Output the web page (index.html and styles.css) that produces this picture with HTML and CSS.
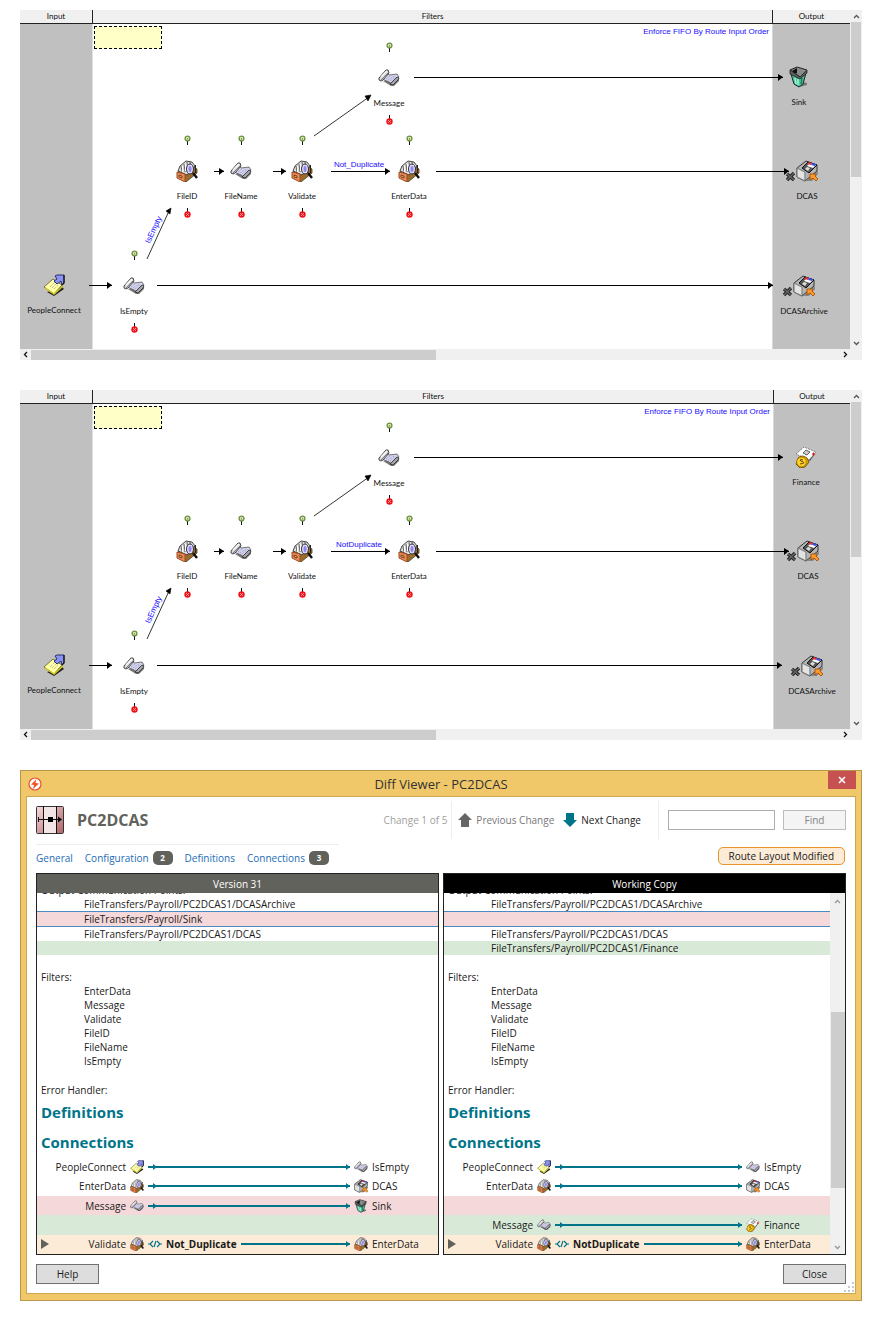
FILE: index.html
```html
<!DOCTYPE html>
<html lang="en">
<head>
<meta charset="utf-8">
<title>Diff Viewer - PC2DCAS</title>
<link rel="stylesheet" href="styles.css">
</head>
<body>
<svg class="defs" aria-hidden="true">
  <symbol id="scroll" viewBox="0 0 22 22">
    <path d="M5 14l8 5h3l5-5v-2z" fill="#777"/>
    <path d="M8 4l3 4 8-1 2 3-7 7-3-2-7-3z" fill="#d4d4ee" stroke="#555" stroke-width=".8"/>
    <path d="M1 11l7-8h2l1 3-6 7-2 1-2-1z" fill="#d8d8dc" stroke="#333" stroke-width=".9"/>
    <path d="M3 10l6-6" stroke="#fff" stroke-width="1.200"/>
    <path d="M3 13l7-7" stroke="#666" stroke-width=".8"/>
    <path d="M12 17l7-7 2 1-1 2-5 5z" fill="#a4a4ac" stroke="#333" stroke-width=".9"/>
    <path d="M8 12l4-3M10 13l6-4M12 14l6-5" stroke="#8c8cbc" stroke-width=".8" stroke-dasharray="1 1"/>
  </symbol>
  <symbol id="cards" viewBox="0 0 22 22">
    <path d="M1 13L12 3l9 6v4l-11 9z" fill="#9a6b2a" stroke="#442" stroke-width=".8"/>
    <path d="M2 11L4 6l6-5 6 1 3 4-8 9z" fill="#dcdcdc" stroke="#333" stroke-width=".9"/>
    <path d="M5 6l1 6M8 4l1 8M11 2l1 8M14 2l1 6" stroke="#555" stroke-width=".9"/>
    <path d="M6.500 6v6M9.500 4v7" stroke="#fff"/>
    <path d="M1 12l8 2v8l-8-4z" fill="#ea8a58" stroke="#a04a20"/>
    <path d="M3 15l3 1v2l-3-1z" fill="#d8b040" stroke="#632" stroke-width=".8"/>
    <ellipse cx="14" cy="9" rx="3.500" ry="5" fill="#dcd8ff" stroke="#333"/>
    <ellipse cx="14" cy="9" rx="1.500" ry="3" fill="#9088e8"/>
    <path d="M17 13l4 5" stroke="#111" stroke-width="2.400"/>
    <path d="M19.500 5v8" stroke="#222"/>
  </symbol>
  <symbol id="note" viewBox="0 0 22 22">
    <path d="M4 18l7 4 10-7-2-2z" fill="#222"/>
    <path d="M1 13L10 5l9 6-8 9z" fill="#ffffa8" stroke="#77733a"/>
    <path d="M2 14l9 6 9-8" fill="none" stroke="#d0c820" stroke-width="1.400"/>
    <path d="M7 13l5-5M9 14l5-5M11 15l4-4" stroke="#888" stroke-width=".8" stroke-dasharray="1 1"/>
    <path d="M12 2l2-1h7v8l-2 2-1-4-4 3-3-3 3-2z" fill="#8c92f4" stroke="#26306c"/>
    <path d="M21 1v8l-2 2" fill="none" stroke="#111" stroke-width="1.200"/>
  </symbol>
  <symbol id="bin" viewBox="0 0 22 22">
    <path d="M12 21l7-2v-2l-4-1z" fill="#777"/>
    <path d="M3 8l9 4 6-5-3 11-4 3-5-3z" fill="#4cc496" stroke="#123"/>
    <path d="M7 12l1 6M10 13v6" stroke="#a8f4d8" stroke-width="1.400"/>
    <path d="M14 12l-1 6" stroke="#1d7a5a" stroke-width="1.400"/>
    <path d="M2 4l7-3 10 3-7 7z" fill="#8a8a8a" stroke="#222"/>
    <path d="M4 5l5-3v5l-2 1z" fill="#111"/>
    <path d="M2 4v4l10 5 7-6V4l-7 7z" fill="#5c6462" stroke="#222" stroke-width=".8"/>
  </symbol>
  <symbol id="disk" viewBox="0 0 22 22">
    <path d="M10 21h6l6-7v-3z" fill="#888"/>
    <path d="M1 8l9-7 11 4v6L9 21l-8-4z" fill="#b4b4b4" stroke="#333"/>
    <path d="M1 8l8 4v9l-8-4z" fill="#d4d4d4" stroke="#777"/>
    <path d="M3 10v7M5 11v7M7 12v7" stroke="#f2f2f2"/>
    <path d="M6 8l6-6 9 3-8 8z" fill="#555" stroke="#111"/>
    <path d="M11 6l3-3 6 2-3 3z" fill="#fff"/>
    <path d="M11 4l2-2 3 1-1 2z" fill="#e2363c"/>
    <path d="M16 3l4 1-1 2-4-1z" fill="#3850e8"/>
    <path d="M9 9l2-2 3 1-2 3z" fill="#ddd"/>
    <path d="M14 14h6l-1 2 3 3-2 2-3-3-3 2z" fill="#ff9a2a" stroke="#9c4a00" stroke-width=".8"/>
  </symbol>
  <symbol id="money" viewBox="0 0 22 22">
    <path d="M8 10l12-2-5 7z" fill="#555"/>
    <path d="M1 8l8-7 12 5-7 8z" fill="#fff" stroke="#666" stroke-width=".8" stroke-dasharray="2 1"/>
    <path d="M8 7l3-3 4 2-3 3z" fill="#ccc" stroke="#444" stroke-width=".8"/>
    <path d="M17 8h3M18.500 6.500v3" stroke="#e01818" stroke-width="1.200"/>
    <path d="M3 12q4-4 9 0l2 4-4 5-5 1-4-4z" fill="#e0a400" stroke="#5c4400" stroke-width=".8"/>
    <circle cx="6.500" cy="16" r="4.800" fill="#ffd428" stroke="#a87000" stroke-width=".8"/>
    <path d="M8 14q-3-1-3 0t3 2-3 2" fill="none" stroke="#6a4200"/>
  </symbol>
  <symbol id="cross" viewBox="0 0 11 11">
    <path d="M2 3l7 6M9 2L2 9" stroke="#222" stroke-width="3.400"/>
    <path d="M2 3l7 6M9 2L2 9" stroke="#666" stroke-width="1.400"/>
  </symbol>
  <symbol id="pin-in" viewBox="0 0 7 10">
    <path d="M3.500 6v4" stroke="#111"/>
    <circle cx="3.500" cy="3.500" r="2.400" fill="#e4ecc8" stroke="#6f9440" stroke-width="1.400"/>
    <path d="M2.500 4.500l1-2 1 2z" fill="#6f9440"/>
  </symbol>
  <symbol id="pin-err" viewBox="0 0 7 10">
    <path d="M3.500 0v5" stroke="#111"/>
    <circle cx="3.500" cy="6.500" r="3.200" fill="#f01018"/>
    <path d="M2 5l3 3M5 5L2 8" stroke="#ffb0b0" stroke-width=".8"/>
  </symbol>
  <symbol id="chevron" viewBox="0 0 7 7"><path d="M1 5l2.500-2.500L6 5" fill="none" stroke="currentColor" stroke-width="1.300"/></symbol>
  <symbol id="script" viewBox="0 0 14 8">
    <path d="M0 4h2M12 4h2M5 1L2 4l3 3M9 1l3 3-3 3M8 1L6 7" fill="none" stroke="#007489" stroke-width="1.200"/>
  </symbol>
</svg>

<main class="page">
  <section class="route route-old" aria-label="Route, version 31">
    <div class="route-main">
      <header class="lane-heads"><span class="head-input">Input</span><span class="head-filters">Filters</span><span class="head-output">Output</span></header>
      <div class="canvas">
        <div class="lane lane-input">
          <div class="endpoint at-people"><svg class="icon"><use href="#note"/></svg><span>PeopleConnect</span></div>
        </div>
        <div class="lane lane-filters">
          <div class="sticky-note"></div>
          <p class="fifo">Enforce FIFO By Route Input Order</p>
        </div>
        <div class="lane lane-output">
          <div class="endpoint at-top"><svg class="icon"><use href="#bin"/></svg><span>Sink</span></div>
          <div class="endpoint at-dcas"><svg class="icon"><use href="#disk"/></svg><svg class="cross"><use href="#cross"/></svg><span>DCAS</span></div>
          <div class="endpoint at-archive"><svg class="icon"><use href="#disk"/></svg><svg class="cross"><use href="#cross"/></svg><span>DCASArchive</span></div>
        </div>
        <div class="filter at-message"><svg class="pin"><use href="#pin-in"/></svg><svg class="icon"><use href="#scroll"/></svg><span>Message</span><svg class="pin"><use href="#pin-err"/></svg></div>
        <div class="filter at-fileid"><svg class="pin"><use href="#pin-in"/></svg><svg class="icon"><use href="#cards"/></svg><span>FileID</span><svg class="pin"><use href="#pin-err"/></svg></div>
        <div class="filter at-filename"><svg class="pin"><use href="#pin-in"/></svg><svg class="icon"><use href="#scroll"/></svg><span>FileName</span><svg class="pin"><use href="#pin-err"/></svg></div>
        <div class="filter at-validate"><svg class="pin"><use href="#pin-in"/></svg><svg class="icon"><use href="#cards"/></svg><span>Validate</span><svg class="pin"><use href="#pin-err"/></svg></div>
        <div class="filter at-enterdata"><svg class="pin"><use href="#pin-in"/></svg><svg class="icon"><use href="#cards"/></svg><span>EnterData</span><svg class="pin"><use href="#pin-err"/></svg></div>
        <div class="filter at-isempty"><svg class="pin"><use href="#pin-in"/></svg><svg class="icon"><use href="#scroll"/></svg><span>IsEmpty</span><svg class="pin"><use href="#pin-err"/></svg></div>
        <div class="wire wire-people"></div>
        <div class="wire wire-fileid"></div>
        <div class="wire wire-filename"></div>
        <div class="wire wire-validate"></div>
        <div class="wire wire-message"></div>
        <div class="wire wire-dcas"></div>
        <div class="wire wire-archive"></div>
        <svg class="diagonals" viewBox="0 0 380 240"><g fill="none" stroke="#000" stroke-width=".8"><path d="M294 112L349 73M127 235l22-48"/></g><path d="M351 71l-3 6-3-5zM151 184l-1 6-4-3z" stroke="#000" stroke-width=".6"/></svg>
        <span class="wire-label label-duplicate">Not_Duplicate</span>
        <span class="wire-label label-empty">IsEmpty</span>
      </div>
    </div>
    <div class="vscroll"><svg class="chev"><use href="#chevron"/></svg><i class="thumb"></i><svg class="chev down"><use href="#chevron"/></svg></div>
    <div class="hscroll"><svg class="chev left"><use href="#chevron"/></svg><i class="thumb"></i><svg class="chev right"><use href="#chevron"/></svg></div>
  </section>

  <section class="route route-new" aria-label="Route, working copy">
    <div class="route-main">
      <header class="lane-heads"><span class="head-input">Input</span><span class="head-filters">Filters</span><span class="head-output">Output</span></header>
      <div class="canvas">
        <div class="lane lane-input">
          <div class="endpoint at-people"><svg class="icon"><use href="#note"/></svg><span>PeopleConnect</span></div>
        </div>
        <div class="lane lane-filters">
          <div class="sticky-note"></div>
          <p class="fifo">Enforce FIFO By Route Input Order</p>
        </div>
        <div class="lane lane-output">
          <div class="endpoint at-top"><svg class="icon"><use href="#money"/></svg><span>Finance</span></div>
          <div class="endpoint at-dcas"><svg class="icon"><use href="#disk"/></svg><svg class="cross"><use href="#cross"/></svg><span>DCAS</span></div>
          <div class="endpoint at-archive"><svg class="icon"><use href="#disk"/></svg><svg class="cross"><use href="#cross"/></svg><span>DCASArchive</span></div>
        </div>
        <div class="filter at-message"><svg class="pin"><use href="#pin-in"/></svg><svg class="icon"><use href="#scroll"/></svg><span>Message</span><svg class="pin"><use href="#pin-err"/></svg></div>
        <div class="filter at-fileid"><svg class="pin"><use href="#pin-in"/></svg><svg class="icon"><use href="#cards"/></svg><span>FileID</span><svg class="pin"><use href="#pin-err"/></svg></div>
        <div class="filter at-filename"><svg class="pin"><use href="#pin-in"/></svg><svg class="icon"><use href="#scroll"/></svg><span>FileName</span><svg class="pin"><use href="#pin-err"/></svg></div>
        <div class="filter at-validate"><svg class="pin"><use href="#pin-in"/></svg><svg class="icon"><use href="#cards"/></svg><span>Validate</span><svg class="pin"><use href="#pin-err"/></svg></div>
        <div class="filter at-enterdata"><svg class="pin"><use href="#pin-in"/></svg><svg class="icon"><use href="#cards"/></svg><span>EnterData</span><svg class="pin"><use href="#pin-err"/></svg></div>
        <div class="filter at-isempty"><svg class="pin"><use href="#pin-in"/></svg><svg class="icon"><use href="#scroll"/></svg><span>IsEmpty</span><svg class="pin"><use href="#pin-err"/></svg></div>
        <div class="wire wire-people"></div>
        <div class="wire wire-fileid"></div>
        <div class="wire wire-filename"></div>
        <div class="wire wire-validate"></div>
        <div class="wire wire-message"></div>
        <div class="wire wire-dcas"></div>
        <div class="wire wire-archive"></div>
        <svg class="diagonals" viewBox="0 0 380 240"><g fill="none" stroke="#000" stroke-width=".8"><path d="M294 112L349 73M127 235l22-48"/></g><path d="M351 71l-3 6-3-5zM151 184l-1 6-4-3z" stroke="#000" stroke-width=".6"/></svg>
        <span class="wire-label label-duplicate">NotDuplicate</span>
        <span class="wire-label label-empty">IsEmpty</span>
      </div>
    </div>
    <div class="vscroll"><svg class="chev"><use href="#chevron"/></svg><i class="thumb"></i><svg class="chev down"><use href="#chevron"/></svg></div>
    <div class="hscroll"><svg class="chev left"><use href="#chevron"/></svg><i class="thumb"></i><svg class="chev right"><use href="#chevron"/></svg></div>
  </section>

  <section class="dialog" role="dialog" aria-labelledby="dialog-title">
    <header class="titlebar">
      <svg class="app-icon" viewBox="0 0 14 14"><circle cx="7" cy="7" r="6" fill="#fff" stroke="#e8502a" stroke-width="1.200"/><path d="M8.500 2L3 7.500l3 .5L5 12l6-5.500-3.500-.5z" fill="#f0542c"/></svg>
      <h1 id="dialog-title" class="title">Diff Viewer - PC2DCAS</h1>
      <button class="close-x" type="button" aria-label="Close window"><svg viewBox="0 0 8 8"><path d="M1 1l6 6M7 1L1 7" stroke="#fff" stroke-width="1.600"/></svg></button>
    </header>
    <div class="dialog-body">
      <div class="toolbar">
        <div class="route-id">
          <svg class="route-icon" viewBox="0 0 28 28">
            <defs><linearGradient id="rose" x2="1" y2="1"><stop stop-color="#f6dada"/><stop offset="1" stop-color="#b06468"/></linearGradient></defs>
            <rect x=".5" y=".5" width="27" height="27" rx="1" fill="#f3e4e6" stroke="#333"/>
            <path d="M1 1h6v26H1zM21 1h6v26h-6z" fill="url(#rose)"/>
            <path d="M7.500 0v28M20.500 0v28" stroke="#111"/>
            <path d="M2 13.500h22M2.500 11v5" stroke="#111"/><path d="M12 11h5v5h-5zM22 10.500l4 3-4 3z" fill="#000"/>
          </svg>
          <h2 class="route-name">PC2DCAS</h2>
        </div>
        <div class="stepper">
          <span class="counter">Change 1 of 5</span>
          <div class="step-buttons">
            <button class="step prev" type="button"><svg viewBox="0 0 14 14"><path d="M7 0l7 7h-3v7H3V7H0z" fill="#666"/></svg>Previous Change</button>
            <button class="step" type="button"><svg viewBox="0 0 14 14"><path d="M7 14l7-7h-3V0H3v7H0z" fill="#007489"/></svg>Next Change</button>
          </div>
        </div>
        <form class="find">
          <input class="find-box" type="text" aria-label="Find text">
          <button class="btn btn-off" type="button">Find</button>
        </form>
      </div>
      <div class="tab-row">
        <nav class="tabs">
          <a href="#general">General</a>
          <a href="#configuration">Configuration<b>2</b></a>
          <a href="#definitions">Definitions</a>
          <a href="#connections">Connections<b>3</b></a>
        </nav>
        <span class="layout-flag">Route Layout Modified</span>
      </div>
      <div class="panes">
        <article class="pane pane-old">
          <h3 class="pane-head">Version 31</h3>
          <div class="pane-body">
            <div class="doc">
              <p class="line clipped">Output Communication Points:</p>
              <p class="line path">FileTransfers/Payroll/PC2DCAS1/DCASArchive</p>
              <p class="line path removed current">FileTransfers/Payroll/Sink</p>
              <p class="line path">FileTransfers/Payroll/PC2DCAS1/DCAS</p>
              <p class="line path added"></p>
              <p class="line spaced">Filters:</p>
              <p class="line path">EnterData</p>
              <p class="line path">Message</p>
              <p class="line path">Validate</p>
              <p class="line path">FileID</p>
              <p class="line path">FileName</p>
              <p class="line path">IsEmpty</p>
              <p class="line spaced">Error Handler:</p>
              <h4 class="section">Definitions</h4>
              <h4 class="section">Connections</h4>
              <div class="link"><span class="from">PeopleConnect</span><svg class="mini"><use href="#note"/></svg><span class="flow"></span><svg class="mini"><use href="#scroll"/></svg><span>IsEmpty</span></div>
              <div class="link"><span class="from">EnterData</span><svg class="mini"><use href="#cards"/></svg><span class="flow"></span><svg class="mini"><use href="#disk"/></svg><span>DCAS</span></div>
              <div class="link removed"><span class="from">Message</span><svg class="mini"><use href="#scroll"/></svg><span class="flow"></span><svg class="mini"><use href="#bin"/></svg><span>Sink</span></div>
              <div class="link added"></div>
              <div class="link changed"><span class="from"><button class="expand" type="button" aria-label="Expand"></button>Validate</span><svg class="mini"><use href="#cards"/></svg><span class="flow-named"><svg class="script"><use href="#script"/></svg><strong>Not_Duplicate</strong><i class="flow plain"></i></span><svg class="mini"><use href="#cards"/></svg><span>EnterData</span></div>
            </div>
          </div>
        </article>
        <article class="pane pane-new">
          <h3 class="pane-head">Working Copy</h3>
          <div class="pane-body">
            <div class="doc">
              <p class="line clipped">Output Communication Points:</p>
              <p class="line path">FileTransfers/Payroll/PC2DCAS1/DCASArchive</p>
              <p class="line path removed current"></p>
              <p class="line path">FileTransfers/Payroll/PC2DCAS1/DCAS</p>
              <p class="line path added">FileTransfers/Payroll/PC2DCAS1/Finance</p>
              <p class="line spaced">Filters:</p>
              <p class="line path">EnterData</p>
              <p class="line path">Message</p>
              <p class="line path">Validate</p>
              <p class="line path">FileID</p>
              <p class="line path">FileName</p>
              <p class="line path">IsEmpty</p>
              <p class="line spaced">Error Handler:</p>
              <h4 class="section">Definitions</h4>
              <h4 class="section">Connections</h4>
              <div class="link"><span class="from">PeopleConnect</span><svg class="mini"><use href="#note"/></svg><span class="flow"></span><svg class="mini"><use href="#scroll"/></svg><span>IsEmpty</span></div>
              <div class="link"><span class="from">EnterData</span><svg class="mini"><use href="#cards"/></svg><span class="flow"></span><svg class="mini"><use href="#disk"/></svg><span>DCAS</span></div>
              <div class="link removed"></div>
              <div class="link added"><span class="from">Message</span><svg class="mini"><use href="#scroll"/></svg><span class="flow"></span><svg class="mini"><use href="#money"/></svg><span>Finance</span></div>
              <div class="link changed"><span class="from"><button class="expand" type="button" aria-label="Expand"></button>Validate</span><svg class="mini"><use href="#cards"/></svg><span class="flow-named"><svg class="script"><use href="#script"/></svg><strong>NotDuplicate</strong><i class="flow plain"></i></span><svg class="mini"><use href="#cards"/></svg><span>EnterData</span></div>
            </div>
            <div class="doc-scroll"><svg class="chev"><use href="#chevron"/></svg><i class="thumb"></i><svg class="chev down"><use href="#chevron"/></svg></div>
          </div>
        </article>
      </div>
      <footer class="actions">
        <button class="btn" type="button">Help</button>
        <button class="btn" type="button">Close</button>
      </footer>
      <svg class="grip" viewBox="0 0 10 10"><path d="M8 0h2v2H8zM4 4h2v2H4zM8 4h2v2H8zM0 8h2v2H0zM4 8h2v2H4zM8 8h2v2H8z" fill="#c4cad4"/></svg>
    </div>
  </section>
</main>
</body>
</html>
```

FILE: styles.css
```css
* { box-sizing: border-box; }
body { margin: 0; background: #fff; color: #1a1a1a; font-family: "Open Sans", "Noto Sans", sans-serif; font-size: 10px; }
h1, h2, h3, h4, p { margin: 0; font-size: inherit; font-weight: normal; }
button, input { font: inherit; color: inherit; margin: 0; }
svg { display: block; flex: none; }
.defs { position: absolute; width: 0; height: 0; }
.page { display: flex; flex-direction: column; gap: 30px; padding: 10px 19px 20px 20px; }

/* route diagrams */
.route { display: grid; grid-template-columns: 1fr 12px; background: #f0f0f0; font: 8px/10px Lato, sans-serif; color: #111; }
.lane-heads { display: flex; height: 14px; border-bottom: 1px solid #222; line-height: 13px; text-align: center; }
.head-input { width: 73px; border-right: 1px solid #222; }
.head-filters { flex: 1; }
.head-output { width: 78px; border-left: 1px solid #222; }
.canvas { position: relative; display: flex; height: 325px; }
.lane { position: relative; }
.lane-input { width: 73px; background: #c0c0c0; border-right: 1px solid #e0e0e0; }
.lane-filters { flex: 1; background: #fff; }
.lane-output { width: 78px; background: #c0c0c0; border-left: 1px solid #d8d8d8; }
.route-new .head-output, .route-new .lane-output { width: 77px; }
.sticky-note { position: absolute; left: 1px; top: 2px; width: 68px; height: 23px; background: #ffffc8; border: 1px dashed #000; }
.fifo { position: absolute; right: 3px; top: 3px; font: 8px/10px "Liberation Sans", sans-serif; color: #1a0dff; }

.filter, .endpoint { position: absolute; display: flex; flex-direction: column; align-items: center; width: 60px; white-space: nowrap; }
.icon { width: 22px; height: 22px; margin-bottom: 9px; }
.pin { width: 7px; height: 10px; }
.filter .icon { margin-top: 15px; }
.filter span { margin-bottom: 7px; }
.cross { position: absolute; left: 8px; top: 11px; width: 11px; height: 11px; }
.at-people { left: 4px; top: 250px; }
.at-message { left: 339px; top: 18px; }
.at-fileid { left: 137px; top: 111px; }
.at-filename { left: 191px; top: 111px; }
.at-validate { left: 252px; top: 111px; }
.at-enterdata { left: 359px; top: 111px; }
.at-isempty { left: 84px; top: 226px; }
.at-top { left: -4px; top: 42px; }
.at-dcas { left: 4px; top: 136px; }
.at-archive { left: 1px; top: 251px; }
.route-new .at-top { left: 2px; }
.route-new .at-archive { left: 8px; }

.wire { position: absolute; height: 1px; background: #000; }
.wire::after { content: ""; position: absolute; right: 0; top: -3px; border: solid transparent; border-width: 3px 0 4px 5px; border-left-color: #000; }
.wire-people { left: 69px; top: 261px; width: 23px; }
.wire-fileid { left: 194px; top: 147px; width: 10px; }
.wire-filename { left: 253px; top: 147px; width: 13px; }
.wire-validate { left: 311px; top: 147px; width: 59px; }
.wire-message { left: 394px; right: 67px; top: 53px; }
.wire-dcas { left: 416px; right: 61px; top: 147px; }
.wire-archive { left: 137px; right: 77px; top: 261px; }
.route-new .wire-archive { right: 68px; }
.diagonals { position: absolute; left: 0; top: 0; width: 380px; height: 240px; }
.wire-label { position: absolute; font: 8px/10px "Liberation Sans", sans-serif; color: #1a0dff; text-align: center; }
.label-duplicate { left: 309px; top: 136px; width: 60px; }
.label-empty { left: 114px; top: 201px; width: 40px; transform: rotate(-65deg); }

.vscroll, .doc-scroll { display: flex; flex-direction: column; align-items: center; background: #f0f0f0; color: #555; }
.vscroll { padding: 3px 0 2px; }
.vscroll .thumb { width: 10px; height: 155px; margin: 2px 0 auto; }
.chev { width: 7px; height: 7px; }
.thumb { background: #cdcdcd; }
.down { transform: rotate(180deg); }
.left { transform: rotate(-90deg); }
.right { transform: rotate(90deg); }
.hscroll { grid-column: 1 / -1; display: flex; align-items: center; height: 11px; padding: 0 13px 0 2px; }
.hscroll .thumb { width: 49%; height: 10px; margin: 0 auto 0 2px; }

/* diff dialog */
.dialog { background: #f0c869; border: 1px solid #b8974c; padding: 0 5px 6px; }
.titlebar { display: grid; grid-template-columns: 28px 1fr 28px; align-items: center; height: 25px; }
.app-icon { width: 14px; height: 14px; margin-left: 2px; }
.title { font-size: 13px; text-align: center; color: #333; }
.close-x { align-self: start; display: grid; place-items: center; width: 28px; height: 18px; padding: 0; border: 0; background: #c75050; }
.close-x svg { width: 8px; height: 8px; }
.dialog-body { position: relative; background: #fff; border: 1px solid #cda74f; padding: 4px 9px 9px; }
.toolbar { display: flex; height: 38px; align-items: center; }
.route-id { display: flex; align-items: center; gap: 13px; flex: 1; }
.route-icon { width: 28px; height: 28px; }
.route-name { font-size: 16px; font-weight: bold; color: #62625c; }
.stepper { display: flex; align-items: center; gap: 4px; }
.counter { color: #a0a0a0; }
.step-buttons { display: flex; gap: 9px; align-items: center; height: 38px; padding: 0 17px 0 6px; border: solid #eee; border-width: 0 1px; }
.step { display: flex; align-items: center; gap: 4px; padding: 0; border: 0; background: none; white-space: nowrap; }
.step svg { width: 14px; height: 14px; }
.prev { color: #777; }
.find { display: flex; gap: 8px; margin-left: 9px; }
.find-box { width: 107px; height: 20px; border: 1px solid #abadb3; background: #fff; }
.btn { width: 63px; height: 20px; padding: 0; border: 1px solid #707070; background: #ddd; }
.btn-off { border-color: #bcbcbc; background: #f4f4f4; color: #838383; }
.tab-row { display: flex; justify-content: space-between; align-items: flex-start; margin-top: 5px; height: 29px; padding-right: 1px; }
.tabs { display: flex; align-items: center; gap: 12px; border-top: 1px solid #eee; height: 27px; padding-right: 10px; }
.tabs a { display: flex; align-items: center; gap: 4px; color: #1c6cb4; text-decoration: none; }
.tabs b { width: 20px; border-radius: 5px; background: #62625c; color: #fff; font-size: 8px; line-height: 14px; text-align: center; }
.layout-flag { margin-top: 3px; padding: 0 10px; border: 1px solid #e8952a; border-radius: 5px; background: #fcebd6; line-height: 16px; }
.panes { display: grid; grid-template-columns: 1fr 1fr; gap: 4px; }
.pane { display: flex; flex-direction: column; border: 1px solid #222; height: 382px; min-width: 0; }
.pane-head { background: #62625c; color: #fff; text-align: center; line-height: 20px; height: 19px; }
.pane-new .pane-head { background: #000; }
.pane-body { display: flex; flex: 1; overflow: hidden; }
.doc { flex: 1; min-width: 0; display: flex; flex-direction: column; }
.line { height: 14px; line-height: 14px; padding-left: 4px; white-space: nowrap; flex: none; }
.path { padding-left: 47px; }
.clipped { margin-top: -10px; }
.spaced { margin-top: 15px; }
.removed { background: #f5d8d9; }
.added { background: #d8ead7; }
.changed { background: #fcebd6; }
.current { height: 16px; border: solid #4a8ac4; border-width: 1px 0; }
.section { color: #007489; font-size: 15px; font-weight: bold; line-height: 30px; height: 30px; padding-left: 4px; }
.link { display: grid; grid-template-columns: 89px 14px 1fr 14px 66px; gap: 4px; align-items: center; flex: 1; }
.mini { width: 14px; height: 14px; }
.from { display: flex; align-items: center; justify-content: flex-end; }
.expand { width: 0; height: 0; padding: 0; background: none; border: solid transparent; border-width: 5px 0 5px 8px; border-left-color: #62625c; margin: 0 auto 0 4px; }
.flow { position: relative; height: 2px; background: #007489; }
.flow::before, .flow::after { content: ""; position: absolute; top: -2px; border: solid transparent; border-width: 3px 0 3px 4px; border-left-color: #007489; }
.flow::before { left: 5px; }
.flow::after { right: 0; }
.flow-named { display: flex; align-items: center; gap: 4px; }
.plain { flex: 1; }
.plain::before { display: none; }
.script { width: 14px; height: 8px; }
.doc-scroll { width: 15px; padding: 5px 0 3px; color: #999; }
.doc-scroll .thumb { width: 14px; height: 176px; margin: auto 0 56px; }
.actions { display: flex; justify-content: space-between; margin-top: 9px; }
.grip { position: absolute; right: 1px; bottom: 1px; width: 10px; height: 10px; }
```
